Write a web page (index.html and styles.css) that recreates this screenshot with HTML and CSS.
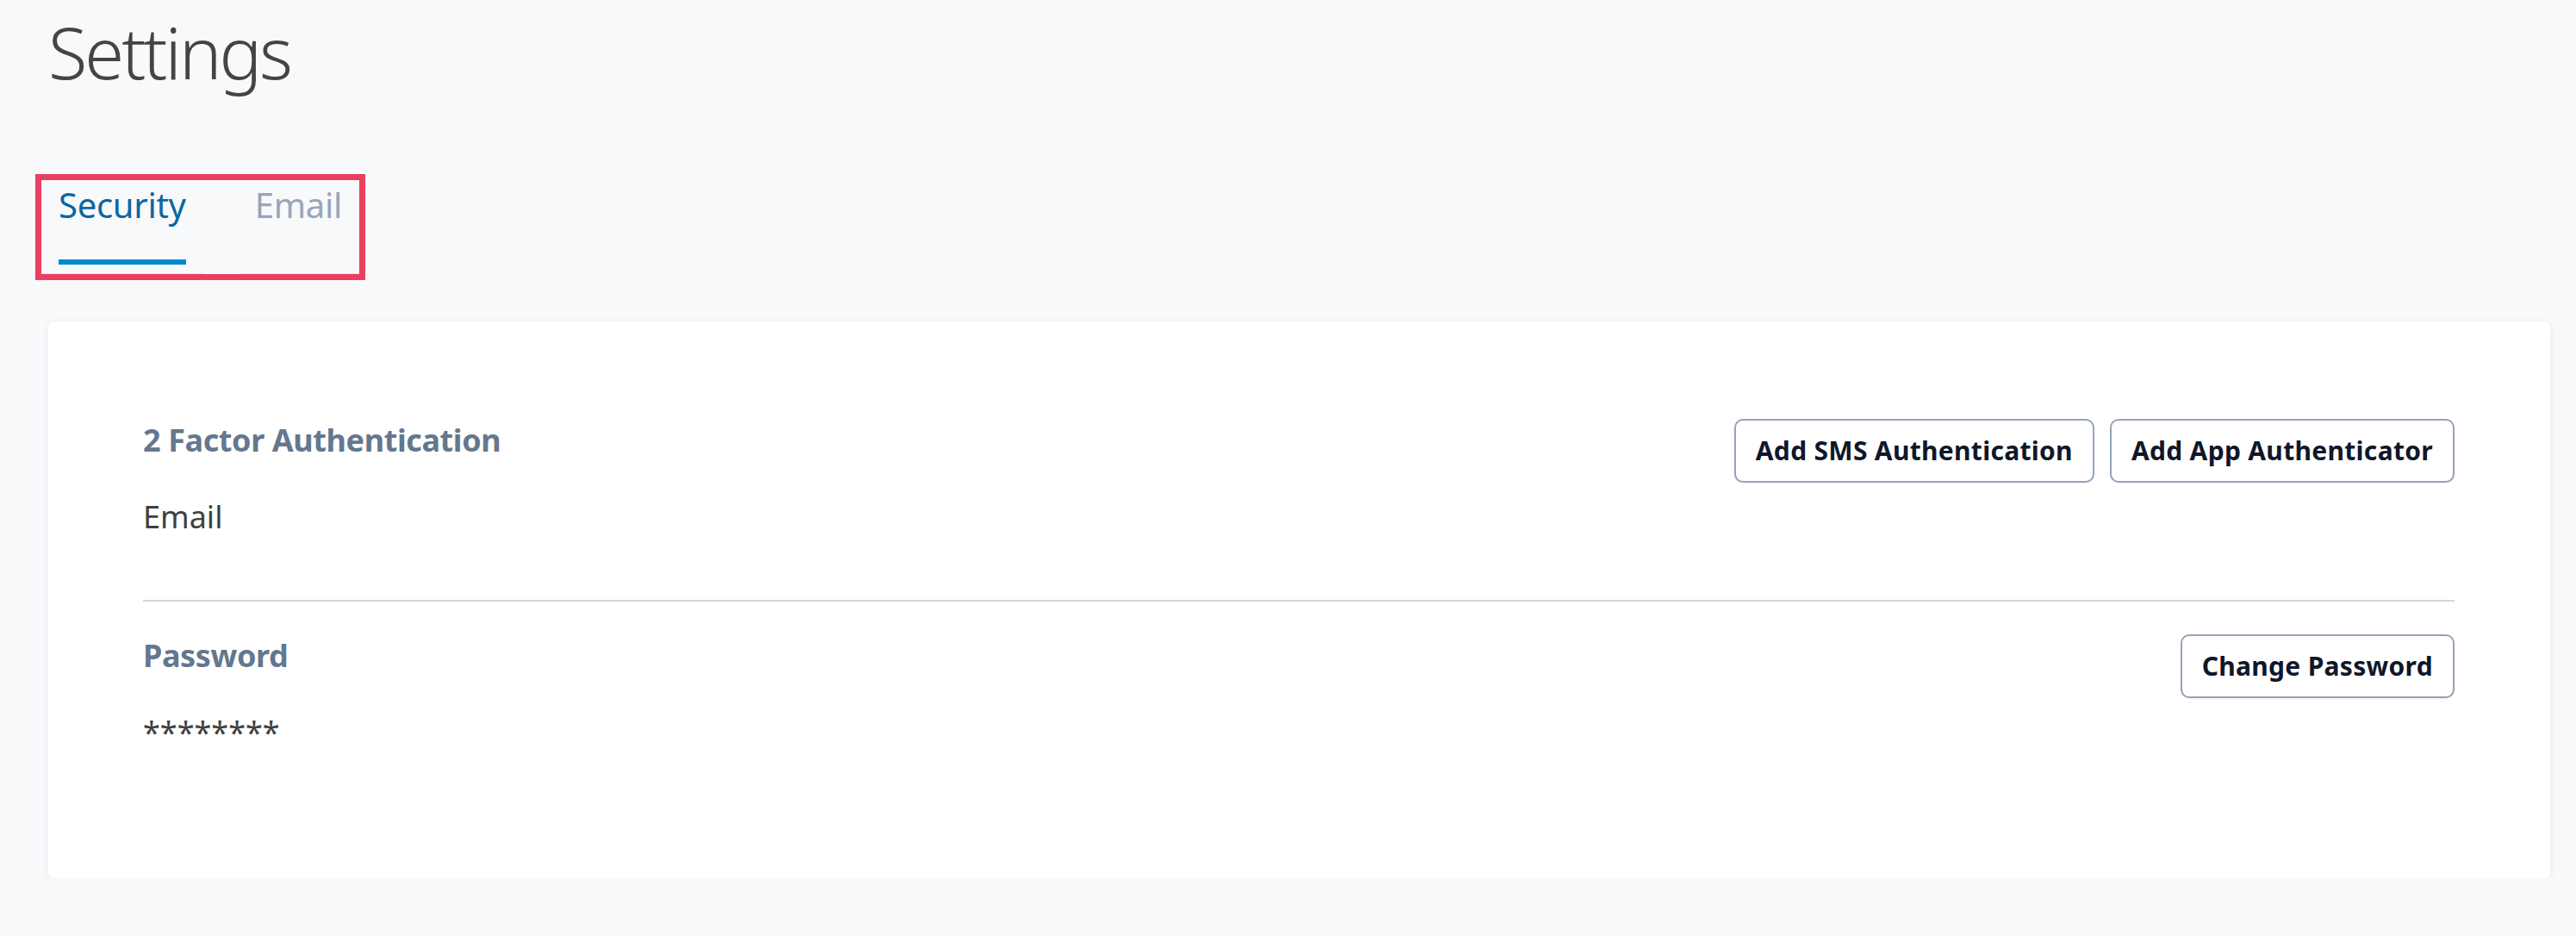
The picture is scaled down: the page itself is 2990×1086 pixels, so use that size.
FILE: index.html
```html
<!DOCTYPE html>
<html lang="en">
<head>
<meta charset="utf-8">
<title>Settings</title>
<link rel="stylesheet" href="styles.css">
</head>
<body>
<main class="page">
  <h1 class="page-title">Settings</h1>
  <nav class="tabs">
    <div class="tab tab-active">
      <span class="tab-label">Security</span>
      <span class="tab-indicator"></span>
    </div>
    <div class="tab">
      <span class="tab-label">Email</span>
      <span class="tab-indicator"></span>
    </div>
  </nav>
  <section class="card">
    <div class="row row-first">
      <div class="row-info">
        <h2 class="row-heading">2 Factor Authentication</h2>
        <p class="row-value">Email</p>
      </div>
      <div class="row-actions">
        <button class="btn">Add SMS Authentication</button>
        <button class="btn">Add App Authenticator</button>
      </div>
    </div>
    <hr class="divider">
    <div class="row row-second">
      <div class="row-info">
        <h2 class="row-heading">Password</h2>
        <p class="row-value">********</p>
      </div>
      <div class="row-actions">
        <button class="btn">Change Password</button>
      </div>
    </div>
  </section>
</main>
</body>
</html>
```
FILE: styles.css
```css
html, body {
  margin: 0;
  padding: 0;
}
body {
  background: #f8f9fb;
  font-family: "Noto Sans", "Open Sans", "Liberation Sans", sans-serif;
  color: #404040;
}
.page {
  padding: 3px 30px 0 56px;
}
.page-title {
  margin: 0;
  font-size: 83px;
  font-weight: 300;
  line-height: 114px;
  letter-spacing: -3px;
  color: #444444;
}
.tabs {
  display: inline-flex;
  gap: 40px;
  margin: 85px 0 0 -15px;
  border: 7px solid #ea3f61;
  background: #f8f9fb;
}
.tab {
  display: flex;
  flex-direction: column;
  align-items: stretch;
  padding: 1px 20px 10px;
  border-bottom: 1px solid #e6e8ec;
  font-size: 40px;
  line-height: normal;
  letter-spacing: -0.3px;
  color: #97a5bb;
}
.tab-label {
  display: block;
}
.tab-indicator {
  display: block;
  height: 6px;
  margin-top: 36px;
}
.tab-active {
  color: #0b67a0;
}
.tab-active .tab-indicator {
  background: #0288cc;
}
.card {
  margin-top: 48px;
  background: #ffffff;
  border-radius: 6px;
  box-shadow: 0 2px 10px rgba(30, 41, 59, 0.07);
  padding: 113px 111px 107px 110px;
}
.row {
  display: flex;
  justify-content: space-between;
  align-items: flex-start;
}
.row-first {
  padding-bottom: 72px;
}
.row-second {
  padding: 38px 0 38px;
}
.row-heading {
  margin: 0;
  font-size: 36px;
  font-weight: 700;
  line-height: normal;
  letter-spacing: -0.4px;
  color: #64778f;
}
.row-value {
  margin: 40px 0 0;
  font-size: 36px;
  font-weight: 400;
  line-height: normal;
  color: #404040;
}
.divider {
  margin: 0;
  border: 0;
  height: 2px;
  background: #d6d6d6;
}
.row-actions {
  display: flex;
  gap: 18px;
}
.btn {
  font-family: "Noto Sans", "Open Sans", "Liberation Sans", sans-serif;
  font-size: 30px;
  font-weight: 700;
  line-height: 40px;
  letter-spacing: 0.3px;
  color: #0f172a;
  background: #ffffff;
  border: 2px solid #94a3b8;
  border-radius: 10px;
  padding: 15px 23px;
  box-shadow: 0 1px 2px rgba(15, 23, 42, 0.06);
  cursor: pointer;
}
```
